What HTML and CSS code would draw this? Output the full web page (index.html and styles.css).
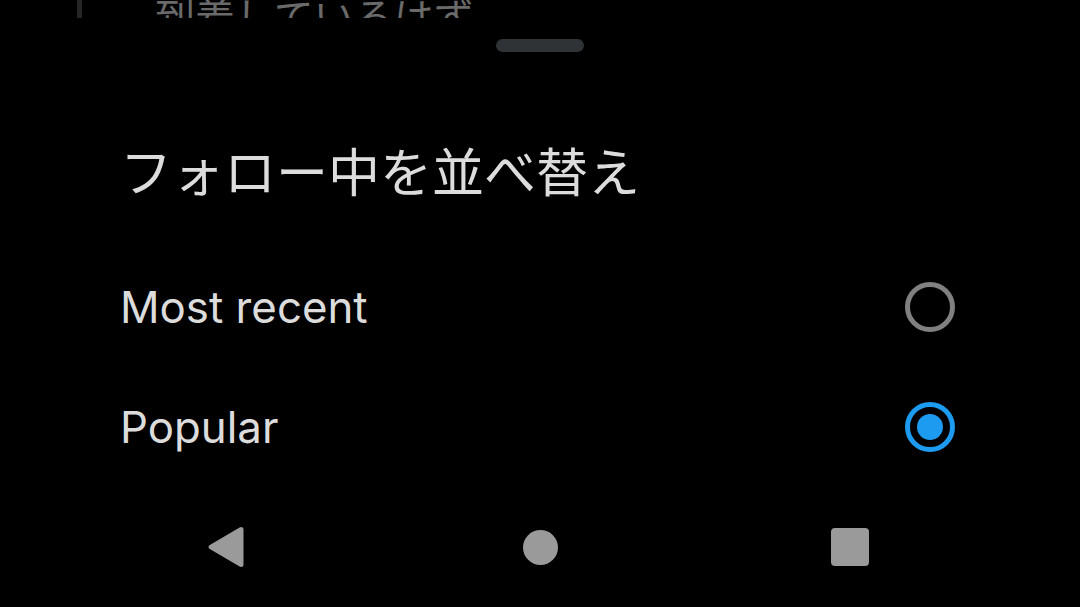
FILE: index.html
```html
<!DOCTYPE html>
<html lang="ja">
<head>
    <meta charset="UTF-8">
    <title>フォロー中を並べ替え</title>
    <link rel="stylesheet" href="styles.css">
</head>
<body>
    <!-- Timeline behind the sheet, only its last line shows -->
    <div class="behind">
        <div class="thread-line"></div>
        <div class="behind-text">到着しているはず</div>
    </div>

    <div class="sheet">
        <div class="handle"></div>
        <h1 class="sheet-title">フォロー中を並べ替え</h1>

        <div class="option">
            <span class="option-label">Most recent</span>
            <span class="radio"></span>
        </div>
        <div class="option">
            <span class="option-label">Popular</span>
            <span class="radio checked"></span>
        </div>
    </div>

    <div class="nav-bar">
        <svg class="nav-back" width="36" height="42" viewBox="0 0 36 42">
            <path d="M33 1 a2.5 2.5 0 0 1 2.5 2.5 V38.5 a2.5 2.5 0 0 1 -2.5 2.5 a2.5 2.5 0 0 1 -1.4 -.5 L1.4 22.8 a2.3 2.3 0 0 1 0 -3.6 L31.6 1.5 a2.5 2.5 0 0 1 1.4 -.5 Z" fill="#9a9a9a"/>
        </svg>
        <div class="nav-home"></div>
        <div class="nav-recent"></div>
    </div>
</body>
</html>
```

FILE: styles.css
```css
* { box-sizing: border-box; }
html, body { height: 100%; }
body {
    margin: 0;
    background: #000;
    font-family: "Inter", "Noto Sans CJK JP", sans-serif;
    overflow: hidden;
}

.behind {
    display: flex;
    align-items: flex-end;
    height: 18px;
    padding-left: 77px;
    overflow: hidden;
}
.thread-line { width: 5px; height: 18px; background: #262626; }
.behind-text {
    flex: none;
    margin-left: 73px;
    margin-bottom: -27px;
    font-family: "Noto Sans CJK JP", sans-serif;
    font-size: 40px;
    line-height: 60px;
    color: #6a6a6a;
}

.sheet { height: 469px; padding: 21px 125px 0 120px; }
.handle {
    width: 88px;
    height: 13px;
    margin: 0 auto;
    transform: translateX(2px);
    border-radius: 7px;
    background: #2f3336;
}
.sheet-title {
    margin: 83px 0 0;
    font-family: "Noto Sans CJK JP", sans-serif;
    font-size: 52px;
    font-weight: 400;
    line-height: 70px;
    color: #dcdcdc;
}
.option {
    display: flex;
    align-items: center;
    justify-content: space-between;
    height: 120px;
}
.sheet-title + .option { margin-top: 42px; }
.option-label { font-size: 43.8px; color: #dcdcdc; }

.radio {
    width: 50px;
    height: 50px;
    border: 5px solid #808080;
    border-radius: 50%;
}
.radio.checked {
    border-color: #1d9bf0;
    padding: 7px;
    background: #1d9bf0 content-box;
}

.nav-bar {
    display: flex;
    align-items: center;
    height: 120px;
    padding-left: 207.5px;
}
.nav-back { display: block; flex: none; }
.nav-home {
    flex: none;
    width: 35px;
    height: 35px;
    margin-left: 279px;
    border-radius: 50%;
    background: #9a9a9a;
}
.nav-recent {
    flex: none;
    width: 38px;
    height: 38px;
    margin-left: 273.5px;
    border-radius: 4px;
    background: #9a9a9a;
}
```
